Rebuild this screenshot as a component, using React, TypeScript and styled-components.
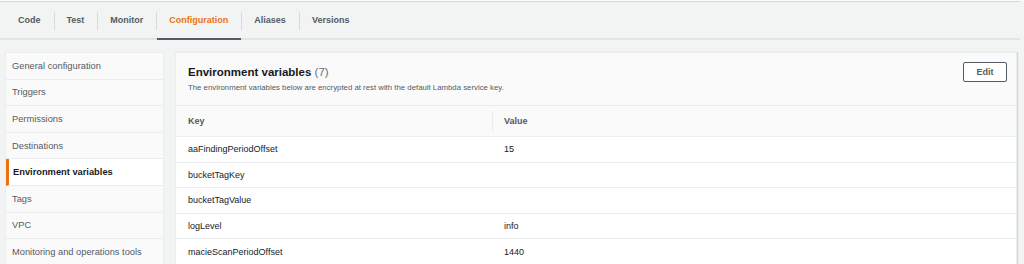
import styled, { createGlobalStyle } from "styled-components";

const GlobalStyle = createGlobalStyle`
  html, body {
    margin: 0;
    padding: 0;
    background: #f2f3f3;
    font-family: "Liberation Sans", Arial, sans-serif;
    color: #16191f;
  }
`;

const tabs = ["Code", "Test", "Monitor", "Configuration", "Aliases", "Versions"];
const menu = [
  "General configuration",
  "Triggers",
  "Permissions",
  "Destinations",
  "Environment variables",
  "Tags",
  "VPC",
  "Monitoring and operations tools",
];
const variables = [
  { key: "aaFindingPeriodOffset", value: "15" },
  { key: "bucketTagKey", value: "" },
  { key: "bucketTagValue", value: "" },
  { key: "logLevel", value: "info" },
  { key: "macieScanPeriodOffset", value: "1440" },
];

export default function App() {
  return (
    <>
      <GlobalStyle />
      <Page>
        <TabBar>
          {tabs.map((t, i) => (
            <Tab key={t} $active={t === "Configuration"} $first={i === 0}>
              {t}
            </Tab>
          ))}
        </TabBar>
        <Content>
          <SideNav>
            {menu.map((m) => (
              <NavItem key={m} $active={m === "Environment variables"}>
                {m}
              </NavItem>
            ))}
          </SideNav>
          <Panel>
            <PanelHeader>
              <HeaderText>
                <Title>
                  Environment variables <Count>(7)</Count>
                </Title>
                <Subtitle>
                  The environment variables below are encrypted at rest with the default Lambda service key.
                </Subtitle>
              </HeaderText>
              <EditButton>Edit</EditButton>
            </PanelHeader>
            <Table>
              <thead>
                <tr>
                  <HeadCell>Key</HeadCell>
                  <HeadCell $divider>Value</HeadCell>
                </tr>
              </thead>
              <tbody>
                {variables.map((v) => (
                  <tr key={v.key}>
                    <Cell>{v.key}</Cell>
                    <Cell>{v.value}</Cell>
                  </tr>
                ))}
              </tbody>
            </Table>
          </Panel>
        </Content>
      </Page>
    </>
  );
}

const Page = styled.div`
  width: 1024px;
  height: 264px;
  overflow: hidden;
  border-top: 1px solid #fafafa;
`;

const TabBar = styled.div`
  display: flex;
  height: 36px;
  margin-right: 4px;
  padding-left: 5px;
  border-top: 1px solid #d5dbdb;
  border-bottom: 2px solid #e1e4e4;
`;

const Tab = styled.div<{ $active?: boolean; $first?: boolean }>`
  position: relative;
  display: flex;
  align-items: center;
  padding: 0 13px;
  font-size: 9px;
  font-weight: 700;
  color: ${(p) => (p.$active ? "#ec7211" : "#545b64")};
  &::before {
    content: "";
    display: ${(p) => (p.$first ? "none" : "block")};
    position: absolute;
    left: 0;
    top: 10px;
    height: 18px;
    border-left: 1px solid #d5dbdb;
  }
  &::after {
    content: "";
    display: ${(p) => (p.$active ? "block" : "none")};
    position: absolute;
    left: 1px;
    right: 0;
    bottom: -2px;
    height: 2px;
    background: #545b64;
  }
`;

const Content = styled.div`
  display: flex;
  gap: 11px;
  margin: 12px 7px 0 5px;
`;

const SideNav = styled.div`
  width: 159px;
  flex-shrink: 0;
  background: #fafafa;
  border: 1px solid #eaeded;
  border-bottom: none;
  box-sizing: border-box;
`;

const NavItem = styled.div<{ $active?: boolean }>`
  height: 26.6px;
  box-sizing: border-box;
  display: flex;
  align-items: center;
  padding-left: ${(p) => (p.$active ? "4px" : "6px")};
  border-bottom: 1px solid #eaeded;
  border-left: ${(p) => (p.$active ? "3px solid #ec7211" : "none")};
  background: ${(p) => (p.$active ? "#ffffff" : "transparent")};
  font-size: 9.3px;
  font-weight: ${(p) => (p.$active ? 700 : 400)};
  color: ${(p) => (p.$active ? "#16191f" : "#545b64")};
  white-space: nowrap;
`;

const Panel = styled.div`
  flex: 1;
  background: #ffffff;
  border: 1px solid #eaeded;
  border-bottom: none;
  box-shadow: 1px 0 1px rgba(0, 28, 36, 0.12);
`;

const PanelHeader = styled.div`
  display: flex;
  justify-content: space-between;
  align-items: flex-start;
  height: 53px;
  box-sizing: border-box;
  padding: 9px 9px 0 12px;
  background: #fafafa;
  border-bottom: 1px solid #eaeded;
`;

const HeaderText = styled.div`
  padding-top: 3px;
`;

const Title = styled.div`
  font-size: 11.5px;
  font-weight: 700;
  color: #16191f;
  line-height: 14px;
`;

const Count = styled.span`
  font-weight: 400;
  color: #687078;
`;

const Subtitle = styled.div`
  margin-top: 4px;
  font-size: 7.8px;
  color: #545b64;
`;

const EditButton = styled.button`
  width: 44px;
  height: 20px;
  padding: 0;
  background: #ffffff;
  border: 1px solid #545b64;
  border-radius: 2px;
  font-family: inherit;
  font-size: 9px;
  font-weight: 700;
  color: #545b64;
`;

const Table = styled.table`
  width: 100%;
  border-collapse: collapse;
`;

const HeadCell = styled.th<{ $divider?: boolean }>`
  position: relative;
  height: 30px;
  padding: 0 0 0 12px;
  text-align: left;
  background: #fafafa;
  border-bottom: 1px solid #eaeded;
  font-size: 9px;
  font-weight: 700;
  color: #545b64;
  &:first-child {
    width: 304px;
  }
  &::before {
    content: "";
    display: ${(p) => (p.$divider ? "block" : "none")};
    position: absolute;
    left: 0;
    top: 5px;
    bottom: 4px;
    border-left: 1px solid #eaeded;
  }
`;

const Cell = styled.td`
  height: 25.6px;
  box-sizing: border-box;
  padding: 0 0 0 12px;
  border-bottom: 1px solid #eaeded;
  font-size: 9px;
  color: #16191f;
`;
